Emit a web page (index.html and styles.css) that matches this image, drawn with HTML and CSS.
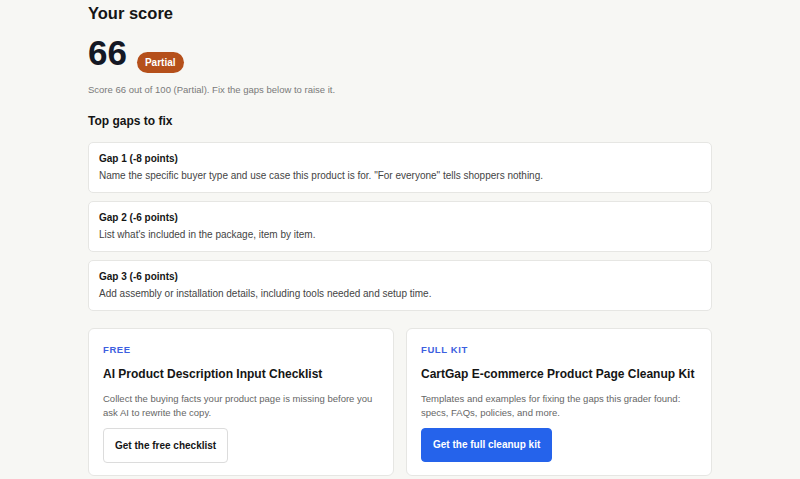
FILE: index.html
```html
<!DOCTYPE html>
<html lang="en">
<head>
<meta charset="utf-8">
<title>Your score</title>
<link rel="stylesheet" href="styles.css">
</head>
<body>
<main class="page">
  <h1 class="title">Your score</h1>
  <div class="score-row">
    <span class="score">66</span>
    <span class="badge">Partial</span>
  </div>
  <p class="summary">Score 66 out of 100 (Partial). Fix the gaps below to raise it.</p>
  <h2 class="subtitle">Top gaps to fix</h2>
  <ul class="gaps">
    <li class="gap">
      <div class="gap-title">Gap 1 (-8 points)</div>
      <div class="gap-desc">Name the specific buyer type and use case this product is for. "For everyone" tells shoppers nothing.</div>
    </li>
    <li class="gap">
      <div class="gap-title">Gap 2 (-6 points)</div>
      <div class="gap-desc">List what's included in the package, item by item.</div>
    </li>
    <li class="gap">
      <div class="gap-title">Gap 3 (-6 points)</div>
      <div class="gap-desc">Add assembly or installation details, including tools needed and setup time.</div>
    </li>
  </ul>
  <div class="offers">
    <section class="offer">
      <div class="offer-label">FREE</div>
      <h3 class="offer-title">AI Product Description Input Checklist</h3>
      <p class="offer-desc">Collect the buying facts your product page is missing before you ask AI to rewrite the copy.</p>
      <a class="btn btn-outline" href="#">Get the free checklist</a>
    </section>
    <section class="offer">
      <div class="offer-label">FULL KIT</div>
      <h3 class="offer-title">CartGap E-commerce Product Page Cleanup Kit</h3>
      <p class="offer-desc">Templates and examples for fixing the gaps this grader found: specs, FAQs, policies, and more.</p>
      <a class="btn btn-primary" href="#">Get the full cleanup kit</a>
    </section>
  </div>
</main>
</body>
</html>
```

FILE: styles.css
```css
* { box-sizing: border-box; }
html, body { margin: 0; padding: 0; }
body {
  background: #f7f7f4;
  font-family: "Liberation Sans", Arial, sans-serif;
  color: #111;
}
.page {
  width: 624px;
  margin: 0 auto;
  padding-top: 3px;
}
.title {
  margin: 0;
  font-size: 16.5px;
  font-weight: 700;
  line-height: 20px;
  color: #151515;
}
.score-row {
  display: flex;
  align-items: flex-start;
  gap: 10px;
  margin-top: 12px;
  height: 38px;
}
.score {
  font-size: 35px;
  font-weight: 700;
  line-height: 36px;
  color: #141824;
}
.badge {
  background: #b5501b;
  color: #fff;
  font-size: 10px;
  font-weight: 700;
  padding: 0 8px;
  height: 21px;
  line-height: 21px;
  border-radius: 11px;
  margin-top: 17px;
}
.summary {
  margin: 10px 0 0;
  font-size: 9.5px;
  line-height: 14px;
  color: #7a7a7a;
}
.subtitle {
  margin: 17px 0 0;
  font-size: 12px;
  font-weight: 700;
  line-height: 15px;
  color: #151515;
}
.gaps {
  list-style: none;
  margin: 13px 0 0;
  padding: 0;
  display: flex;
  flex-direction: column;
  gap: 8px;
}
.gap {
  background: #fff;
  border: 1px solid #e6e6e3;
  border-radius: 5px;
  padding: 9px 10px 0;
  height: 51px;
}
.gap-title {
  font-size: 10px;
  font-weight: 700;
  line-height: 13px;
  color: #151515;
}
.gap-desc {
  margin-top: 4px;
  font-size: 10px;
  line-height: 13px;
  color: #444;
}
.offers {
  display: grid;
  grid-template-columns: 1fr 1fr;
  gap: 12px;
  margin-top: 17px;
}
.offer {
  background: #fff;
  border: 1px solid #e6e6e3;
  border-radius: 6px;
  padding: 15px 14px 0;
  height: 148px;
}
.offer-label {
  font-size: 9.5px;
  font-weight: 700;
  letter-spacing: 0.6px;
  color: #3d5fe0;
  line-height: 12px;
}
.offer-title {
  margin: 11px 0 0;
  font-size: 12px;
  font-weight: 700;
  line-height: 15px;
  color: #151515;
}
.offer-desc {
  margin: 10px 0 0;
  font-size: 9.5px;
  line-height: 14px;
  color: #666;
}
.btn {
  display: inline-block;
  margin-top: 8px;
  font-size: 10px;
  font-weight: 700;
  text-decoration: none;
  border-radius: 4px;
  height: 35px;
  line-height: 33px;
  padding: 0 11px;
}
.btn-outline {
  border: 1px solid #dcdcdc;
  color: #151515;
  background: #fff;
}
.btn-primary {
  background: #2563eb;
  border: 1px solid #2563eb;
  color: #fff;
  height: 34px;
  line-height: 32px;
}
```
